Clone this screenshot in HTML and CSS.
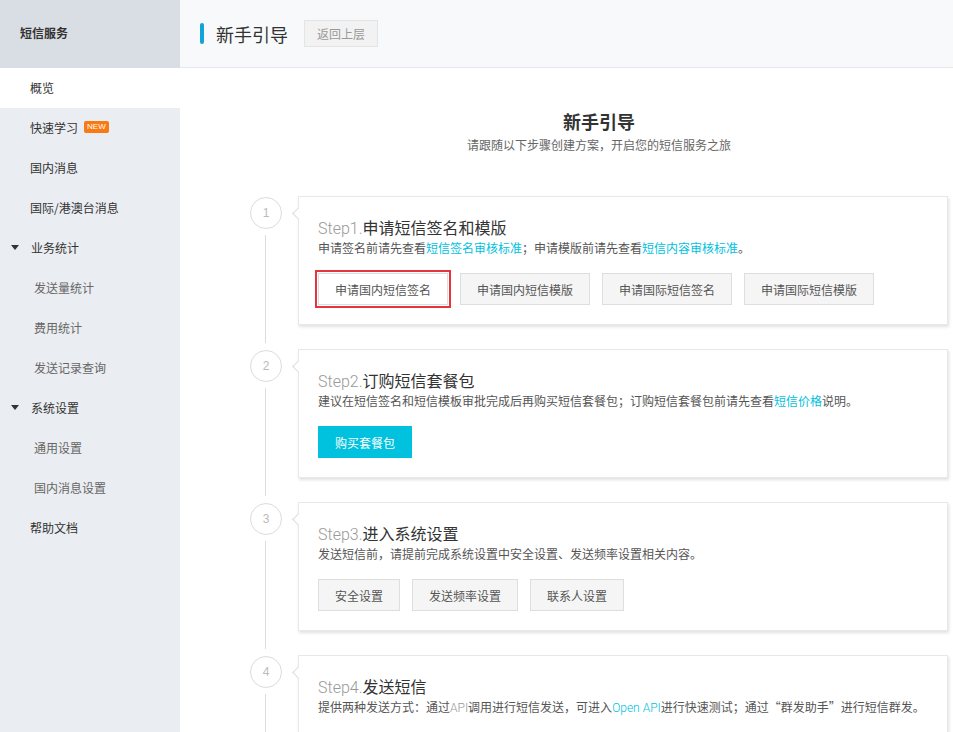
FILE: index.html
```html
<!DOCTYPE html>
<html lang="zh-CN">
<head>
<meta charset="utf-8">
<title>新手引导</title>
<link rel="stylesheet" href="styles.css">
</head>
<body>
<div class="app">
  <aside class="sidebar">
    <div class="side-head">短信服务</div>
    <ul class="menu">
      <li class="item active">概览</li>
      <li class="item">快速学习<span class="badge">NEW</span></li>
      <li class="item">国内消息</li>
      <li class="item">国际/港澳台消息</li>
      <li class="item group"><span class="caret"></span>业务统计</li>
      <li class="item sub">发送量统计</li>
      <li class="item sub">费用统计</li>
      <li class="item sub">发送记录查询</li>
      <li class="item group"><span class="caret"></span>系统设置</li>
      <li class="item sub">通用设置</li>
      <li class="item sub">国内消息设置</li>
      <li class="item">帮助文档</li>
    </ul>
  </aside>
  <main class="main">
    <header class="topbar">
      <span class="bar"></span>
      <h1 class="page-title">新手引导</h1>
      <button class="back">返回上层</button>
    </header>
    <section class="content">
      <div class="intro">
        <h2>新手引导</h2>
        <p>请跟随以下步骤创建方案，开启您的短信服务之旅</p>
      </div>
      <div class="steps">
        <div class="step">
          <div class="rail"><span class="num">1</span><span class="line"></span></div>
          <div class="card">
            <h3><span class="en">Step1.</span>申请短信签名和模版</h3>
            <p class="desc">申请签名前请先查看<a>短信签名审核标准</a>；申请模版前请先查看<a>短信内容审核标准</a>。</p>
            <div class="btns">
              <button class="btn marked">申请国内短信签名</button>
              <button class="btn">申请国内短信模版</button>
              <button class="btn">申请国际短信签名</button>
              <button class="btn">申请国际短信模版</button>
            </div>
          </div>
        </div>
        <div class="step">
          <div class="rail"><span class="num">2</span><span class="line"></span></div>
          <div class="card">
            <h3><span class="en">Step2.</span>订购短信套餐包</h3>
            <p class="desc">建议在短信签名和短信模板审批完成后再购买短信套餐包；订购短信套餐包前请先查看<a>短信价格</a>说明。</p>
            <div class="btns">
              <button class="btn primary">购买套餐包</button>
            </div>
          </div>
        </div>
        <div class="step">
          <div class="rail"><span class="num">3</span><span class="line"></span></div>
          <div class="card">
            <h3><span class="en">Step3.</span>进入系统设置</h3>
            <p class="desc">发送短信前，请提前完成系统设置中安全设置、发送频率设置相关内容。</p>
            <div class="btns">
              <button class="btn">安全设置</button>
              <button class="btn">发送频率设置</button>
              <button class="btn">联系人设置</button>
            </div>
          </div>
        </div>
        <div class="step">
          <div class="rail"><span class="num">4</span><span class="line"></span></div>
          <div class="card">
            <h3><span class="en">Step4.</span>发送短信</h3>
            <p class="desc">提供两种发送方式：通过<span class="thin">API</span>调用进行短信发送，可进入<a class="thin">Open API</a>进行快速测试；通过“群发助手”进行短信群发。</p>
          </div>
        </div>
      </div>
    </section>
  </main>
</div>
</body>
</html>
```

FILE: styles.css
```css
* { box-sizing: border-box; }
html, body { margin: 0; padding: 0; height: 100%; }
body {
  font-family: "Noto Sans CJK SC", "Noto Sans", sans-serif;
  font-size: 12px;
  color: #333;
  overflow: hidden;
  background: #fff;
}
.app { display: flex; height: 732px; }

.sidebar { width: 180px; flex: none; background: #eaedf1; }
.side-head {
  height: 68px; background: #d9dee4; padding: 0 0 4px 20px;
  display: flex; align-items: center; font-weight: bold; font-size: 12px; color: #333;
}
.menu { list-style: none; margin: 0; padding: 0; }
.item {
  height: 40px; display: flex; align-items: center; padding: 0 0 2px 30px;
  color: #333; font-size: 12px;
}
.item.active { background: #fff; }
.item.group { padding-left: 11px; }
.caret {
  width: 0; height: 0; margin-right: 12px;
  border-left: 4px solid transparent; border-right: 4px solid transparent;
  border-top: 5px solid #333;
}
.item.sub { padding-left: 34px; color: #666; }
.badge {
  background: #f97a12; color: #fff; font-size: 8px; line-height: 12px;
  padding: 0 3px; margin-left: 6px; border-radius: 2px; font-family: "Liberation Sans", sans-serif;
}

.main { flex: 1; display: flex; flex-direction: column; min-width: 0; }
.topbar {
  height: 68px; flex: none; background: #f8f9fa; border-bottom: 1px solid #e6e8eb;
  display: flex; align-items: center; padding-left: 20px;
}
.bar { width: 4px; height: 21px; border-radius: 2px; background: #12a3d8; margin-right: 12px; }
.page-title { margin: 0; font-size: 18px; font-weight: normal; color: #333; }
.back {
  margin-left: 16px; height: 27px; width: 74px; padding: 0;
  background: #f2f2f2; border: 1px solid #e4e4e4; color: #999;
  font-family: inherit; font-size: 12px;
}

.content { padding: 0 5px 0 70px; }
.intro { text-align: center; padding-top: 42px; height: 128px; }
.intro h2 { margin: 0; font-size: 18px; font-weight: bold; color: #333; line-height: 22px; }
.intro p { margin: 4px 0 0; color: #666; font-size: 12px; line-height: 18px; }

.step { display: flex; }
.rail { width: 48px; flex: none; display: flex; flex-direction: column; align-items: flex-start; }
.num {
  width: 32px; height: 32px; border-radius: 50%; border: 1px solid #dcdcdc;
  display: flex; align-items: center; justify-content: center;
  color: #bbb; font-size: 12px; font-family: "Liberation Sans", sans-serif; margin-top: 1px;
}
.line { flex: 1; width: 1px; background: #dcdcdc; margin: 6px 0 6px 15px; }

.card {
  flex: 1; position: relative; background: #fff;
  border: 1px solid #e8e8e8; box-shadow: 1px 2px 3px rgba(0,0,0,0.12);
  padding: 19px 20px 19px 19px; margin-bottom: 24px;
}
.card::before {
  content: ""; position: absolute; left: -5px; top: 12px;
  width: 8px; height: 8px; background: #fff;
  border-left: 1px solid #dcdcdc; border-bottom: 1px solid #dcdcdc;
  transform: rotate(45deg);
}
.card h3 { margin: 0; height: 22px; font-size: 16px; font-weight: normal; line-height: 22px; color: #333; }
.en { font-family: "Roboto", "Liberation Sans", sans-serif; font-weight: 300; color: #999; }
.desc { margin: 0; height: 20px; line-height: 20px; color: #555; font-size: 12px; }
.desc a { color: #00c1de; }
.thin { font-family: "Roboto", "Liberation Sans", sans-serif; font-weight: 300; }
.desc .thin { color: #999; }
.desc a.thin { color: #00c1de; }

.btns { display: flex; gap: 12px; margin-top: 15px; }
.btn {
  height: 32px; padding: 0 16px; background: #f5f5f5; border: 1px solid #dedede;
  color: #555; font-family: inherit; font-size: 12px;
}
.btn.marked { background: #fff; outline: 2px solid #e5363c; outline-offset: 1px; }
.btn.primary { background: #00c1de; border-color: #00c1de; color: #fff; }
```
